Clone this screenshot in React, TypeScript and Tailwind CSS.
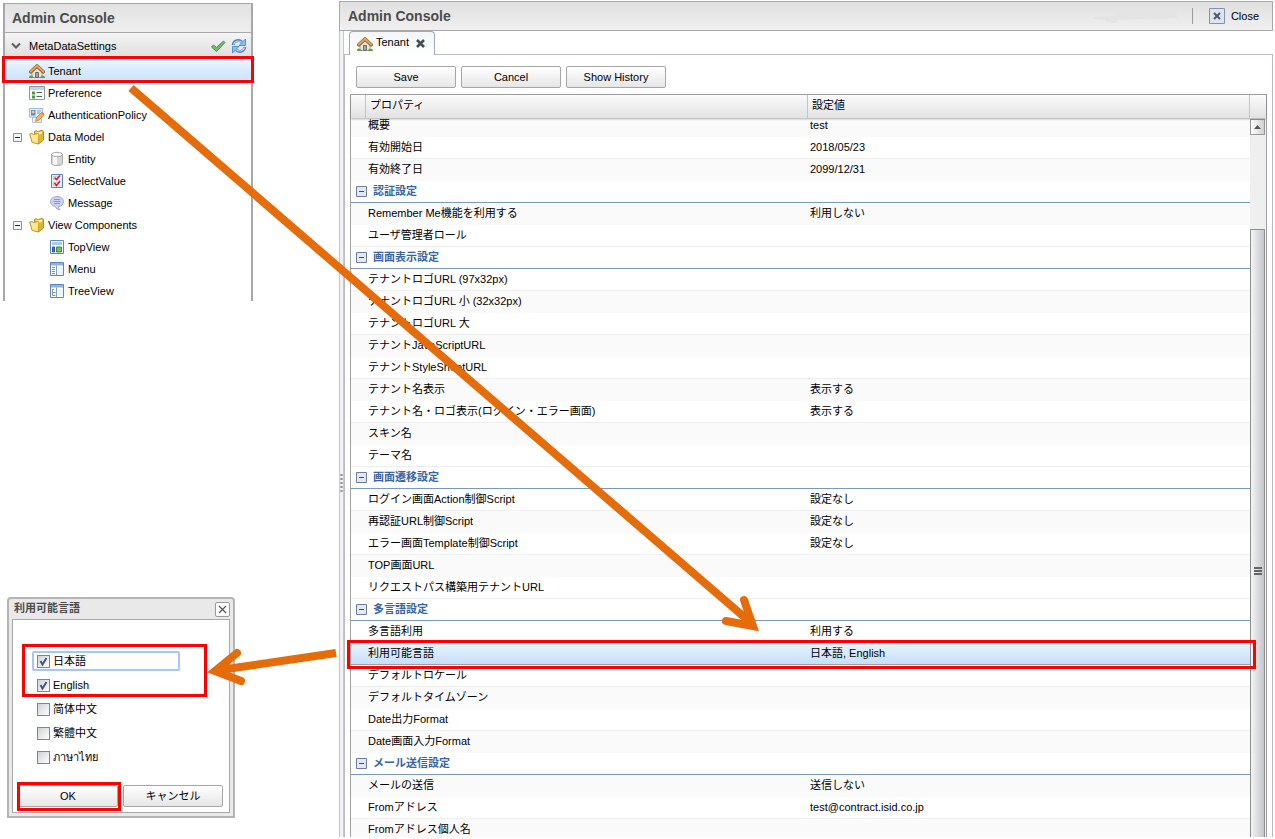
import type { ReactNode } from 'react';

type RowData = { name: string; value?: string; group?: boolean; selected?: boolean };

const ROWS: RowData[] = [
  { name: '概要', value: 'test' },
  { name: '有効開始日', value: '2018/05/23' },
  { name: '有効終了日', value: '2099/12/31' },
  { name: '認証設定', group: true },
  { name: 'Remember Me機能を利用する', value: '利用しない' },
  { name: 'ユーザ管理者ロール' },
  { name: '画面表示設定', group: true },
  { name: 'テナントロゴURL (97x32px)' },
  { name: 'テナントロゴURL 小 (32x32px)' },
  { name: 'テナントロゴURL 大' },
  { name: 'テナントJavaScriptURL' },
  { name: 'テナントStyleSheetURL' },
  { name: 'テナント名表示', value: '表示する' },
  { name: 'テナント名・ロゴ表示(ログイン・エラー画面)', value: '表示する' },
  { name: 'スキン名' },
  { name: 'テーマ名' },
  { name: '画面遷移設定', group: true },
  { name: 'ログイン画面Action制御Script', value: '設定なし' },
  { name: '再認証URL制御Script', value: '設定なし' },
  { name: 'エラー画面Template制御Script', value: '設定なし' },
  { name: 'TOP画面URL' },
  { name: 'リクエストパス構築用テナントURL' },
  { name: '多言語設定', group: true },
  { name: '多言語利用', value: '利用する' },
  { name: '利用可能言語', value: '日本語, English', selected: true },
  { name: 'デフォルトロケール' },
  { name: 'デフォルトタイムゾーン' },
  { name: 'Date出力Format' },
  { name: 'Date画面入力Format' },
  { name: 'メール送信設定', group: true },
  { name: 'メールの送信', value: '送信しない' },
  { name: 'Fromアドレス', value: 'test@contract.isid.co.jp' },
  { name: 'Fromアドレス個人名' },
];

const LANGUAGES = [
  { label: '日本語', checked: true, focused: true },
  { label: 'English', checked: true },
  { label: '简体中文', checked: false },
  { label: '繁體中文', checked: false },
  { label: 'ภาษาไทย', checked: false },
];

function Icon({ children }: { children: ReactNode }) {
  return (
    <svg width="16" height="16" viewBox="0 0 16 16" fill="none" className="shrink-0" aria-hidden="true">
      {children}
    </svg>
  );
}

function HouseIcon() {
  return (
    <Icon>
      <path d="M3 8 8 3.5 13 8v6.5H3z" fill="#e9e7e4" stroke="#8d8a86" strokeWidth=".8" />
      <path d="M6.5 9.5h3v5h-3z" fill="#a9a5a1" stroke="#66615c" strokeWidth=".9" />
      <path d="M1.8 8.8 8 3l6.2 5.8" stroke="#8a5a22" strokeWidth="3.6" strokeLinecap="round" strokeLinejoin="round" />
      <path d="M1.8 8.5 8 2.7l6.2 5.8" stroke="#dfa65a" strokeWidth="2.2" strokeLinecap="round" strokeLinejoin="round" />
      <path d="M0 15c0-2 1-2.8 2.3-2.3 1.3.3 2.3 1 2.7 2.3zM11 15c.3-1.4 1-2 2-2.2 1.8-.5 3 .3 3 2.2z" fill="#5f9e3f" />
    </Icon>
  );
}

function PreferenceIcon() {
  return (
    <Icon>
      <path d="M.5 1.5h15v13H.5z" fill="#fff" stroke="#8b98a5" />
      <path d="M1 2h14v3H1z" fill="#c9d3dd" />
      <path d="M3 6.5h3v3H3zM3 10.5h3v3H3z" fill="#4b9a45" />
      <path d="M7.5 7.5H13M7.5 11.5H13" stroke="#4f6a58" />
    </Icon>
  );
}

function PolicyIcon() {
  return (
    <Icon>
      <path d="M.5 1.5h13V10H.5z" fill="#e8f2fc" stroke="#9dbbdc" />
      <path d="M2 3h4.500v5.500H2z" fill="#4a8ad8" />
      <circle cx="4.2" cy="5" r="1.5" fill="#f7c28d" />
      <path d="M8 4h4M8 6h3" stroke="#6d9cd0" />
      <path d="M3.5 10.5h9v5h-9z" fill="#f3f4f5" stroke="#a9b0b8" strokeWidth=".8" />
      <path d="m6.5 14.500 1-4 5-5L15 8l-5 5z" fill="#f5b353" stroke="#c97d2b" strokeWidth=".8" />
      <path d="m12 6 1.400-1.300 2 2L14.200 8z" fill="#e87966" />
    </Icon>
  );
}

function FolderIcon() {
  return (
    <Icon>
      <path d="M5.5 4V2.500l2-1 1 1L13 1.500l1.500 1V11l-5 4z" fill="#eec84a" stroke="#a87f16" strokeWidth=".9" strokeLinejoin="round" />
      <path d="M7.5 3.500 13 2.700v2l-4 2z" fill="#fdf4bd" />
      <path d="M.7 5 3 4.500l1.500 1L9 4.500l1 .8-.7 9.700L3 13.300z" fill="#fce98e" stroke="#b58c1b" strokeWidth=".9" strokeLinejoin="round" />
      <path d="m9.500 14.500.7-8.500 3.800-2v7z" fill="#e3b52f" />
    </Icon>
  );
}

function EntityIcon() {
  return (
    <Icon>
      <path d="M2.5 3.500v9c0 2.700 11 2.700 11 0v-9z" fill="#d6d6d6" stroke="#a9a9a9" />
      <path d="M4 5v8c1 .7 2 .8 4 .9V5z" fill="#f8f8f8" />
      <ellipse cx="8" cy="3.5" rx="5.5" ry="2.2" fill="#f5f5f5" stroke="#a9a9a9" />
    </Icon>
  );
}

function SelectIcon() {
  return (
    <Icon>
      <path d="M2.500 1.500h11v13h-11z" fill="#e3eff9" stroke="#5486b6" />
      <path d="M4.500 3.500h4v3h-4zM4.500 9.500h4v3h-4z" fill="#fff" stroke="#a9b4bd" strokeWidth=".6" />
      <path d="m5.500 4.500 2 2 3.500-4M5.500 10l2 2.500 3.500-4.500" stroke="#d3262c" strokeWidth="1.7" />
    </Icon>
  );
}

function MessageIcon() {
  return (
    <Icon>
      <path d="M8 1.500c4 0 6.500 2.200 6.500 5S12 11.500 9.500 11.600c0 1.500.5 2.400 1.500 3.200-2.400-.2-4-1.200-4.700-3.300C3.300 11 1.500 9 1.500 6.500c0-2.800 2.500-5 6.500-5z" fill="#cfd1f3" stroke="#a2a4d8" />
      <path d="M5 4.500h6M4.500 6.500h7M5 8.500h6" stroke="#8f92cc" />
    </Icon>
  );
}

function ViewIcon({ kind }: { kind: 'top' | 'menu' | 'tree' }) {
  return (
    <Icon>
      <path d="M1.500 1.500h13v13h-13z" fill="#fff" stroke="#5c86bd" />
      {kind === 'top' && (
        <>
          <path d="M3 3h10v3H3z" fill="#a9cbee" />
          <path d="M3.500 8h2v5h-2z" fill="#3d74bd" stroke="#2b5a9d" />
          <path d="M7.500 8h5v5h-5z" fill="#76bd68" stroke="#3a8a3b" />
        </>
      )}
      {kind !== 'top' && (
        <>
          <path d="M2 2h12v2.500H2z" fill="#8db3e2" />
          <path d="M7.500 4.500V14" stroke="#7e9fca" />
          <path d="M9 6h5v7H9z" fill="#eef4fb" />
        </>
      )}
      {kind === 'menu' && <path d="M3 6.500h3M3 8.500h3M3 10.500h3M3 12.500h3" stroke="#8695a8" />}
      {kind === 'tree' && <path d="M3 6.500h2M3.500 7v5.500M3.500 9.500h3M3.500 12.500h3" stroke="#8695a8" />}
    </Icon>
  );
}

function CheckIcon() {
  return (
    <Icon>
      <path d="m1.500 9 2-2 3 2.500L13.500 3l1.500 1.500-8.500 9z" fill="#6cc067" stroke="#3f963f" strokeLinejoin="round" />
    </Icon>
  );
}

function RefreshIcon() {
  return (
    <Icon>
      <path d="M2.200 7C2.500 3 7.500 1 11 4" stroke="#3b7fce" strokeWidth="2.8" />
      <path d="M2.500 6.500C3.300 3.200 7.500 1.800 10.800 4.300" stroke="#c3e0fa" strokeWidth="1.2" />
      <path d="M14.500 1v6.500H8z" fill="#8cc0f2" stroke="#3b7fce" strokeWidth=".8" />
      <path d="M13.800 9c-.3 4-5.300 6-8.800 3" stroke="#3b7fce" strokeWidth="2.8" />
      <path d="M13.500 9.500c-.8 3.300-5 4.700-8.300 2.200" stroke="#c3e0fa" strokeWidth="1.2" />
      <path d="M1.500 15V8.500H8z" fill="#8cc0f2" stroke="#3b7fce" strokeWidth=".8" />
    </Icon>
  );
}

function TreeToggle() {
  return (
    <svg width="9" height="9" viewBox="0 0 9 9" fill="none" className="shrink-0" aria-hidden="true">
      <path d="M.5.5h8v8h-8z" fill="#f3f6f8" stroke="#7895ad" />
      <path d="M2 4.500h5" stroke="#222" />
    </svg>
  );
}

function GroupToggle() {
  return (
    <svg width="11" height="11" viewBox="0 0 11 11" fill="none" className="shrink-0" aria-hidden="true">
      <path d="M.5.5h10v10H.5z" fill="#e3e8f1" stroke="#6b7c9c" />
      <path d="M3 5.500h5" stroke="#3c4c6c" />
    </svg>
  );
}

function TreeItem({ icon, label, nested, folder, selected }: {
  icon: ReactNode;
  label: string;
  nested?: boolean;
  folder?: boolean;
  selected?: boolean;
}) {
  const indent = nested ? 'pl-[44px]' : folder ? 'pl-[8px]' : 'pl-[24px]';
  return (
    <li
      className={`relative flex h-[22px] items-center ${indent} ${
        selected ? 'bg-linear-to-b from-[#eaf4ff] to-[#c8e2fd]' : ''
      }`}
    >
      {folder && (
        <span className="mr-[7px] flex">
          <TreeToggle />
        </span>
      )}
      {icon}
      <span className="ml-[3px]">{label}</span>
      {selected && <span className="absolute -inset-x-[3px] -bottom-px -top-[4px] border-3 border-[#ff0000]" />}
    </li>
  );
}

function Sidebar() {
  return (
    <aside className="mt-[3px] h-[298px] border-x-2 border-[#a8a8a8]">
      <h1 className="flex h-[29px] items-center border-t border-[#a8a8a8] bg-linear-to-b from-[#e2e2e2] to-[#efefef] pl-[7px] text-[14px] font-bold text-[#4b4b4b]">
        Admin Console
      </h1>
      <div className="flex h-[26px] items-center border-t border-[#a8a8a8] bg-linear-to-b from-[#f5f5f5] to-[#dedede] pl-[6px] pr-[4px]">
        <svg width="10" height="8" viewBox="0 0 10 8" fill="none" aria-hidden="true">
          <path d="m1 1.500 4 4 4-4" stroke="#5b5b5b" strokeWidth="2" />
        </svg>
        <span className="ml-[8px] flex-1">MetaDataSettings</span>
        <button aria-label="Apply" className="mr-[5px]"><CheckIcon /></button>
        <button aria-label="Refresh"><RefreshIcon /></button>
      </div>
      <ul className="pt-[2px]">
        <TreeItem icon={<HouseIcon />} label="Tenant" selected />
        <TreeItem icon={<PreferenceIcon />} label="Preference" />
        <TreeItem icon={<PolicyIcon />} label="AuthenticationPolicy" />
        <TreeItem icon={<FolderIcon />} label="Data Model" folder />
        <TreeItem icon={<EntityIcon />} label="Entity" nested />
        <TreeItem icon={<SelectIcon />} label="SelectValue" nested />
        <TreeItem icon={<MessageIcon />} label="Message" nested />
        <TreeItem icon={<FolderIcon />} label="View Components" folder />
        <TreeItem icon={<ViewIcon kind="top" />} label="TopView" nested />
        <TreeItem icon={<ViewIcon kind="menu" />} label="Menu" nested />
        <TreeItem icon={<ViewIcon kind="tree" />} label="TreeView" nested />
      </ul>
    </aside>
  );
}

function PushButton({ children }: { children: ReactNode }) {
  return (
    <button className="h-[22px] w-[100px] rounded-xs border border-[#a6a6a6] bg-linear-to-b from-white to-[#e6e6e6]">
      {children}
    </button>
  );
}

function LanguageDialog() {
  return (
    <section
      role="dialog"
      aria-label="利用可能言語"
      className="ml-[4px] w-[228px] rounded-t-[4px] border-2 border-[#b4b4b4] bg-[#e9e9e9] px-[3px] pb-[3px]"
    >
      <header className="flex h-[20px] items-center justify-between pl-[2px]">
        <h2 className="pb-[2px] font-bold text-[#4b4b4b]">利用可能言語</h2>
        <button aria-label="Close dialog" className="flex size-[15px] items-center justify-center rounded-xs border border-[#999] bg-white">
          <svg width="9" height="9" viewBox="0 0 9 9" fill="none" aria-hidden="true">
            <path d="m1 1 7 7M8 1 1 8" stroke="#555" strokeWidth="1.2" />
          </svg>
        </button>
      </header>
      <div className="border border-[#a8a8a8] bg-white">
        <div className="flex flex-col pl-[19px] pt-[29px]">
          {LANGUAGES.map((lang) => (
            <label key={lang.label} className="flex h-[24px] items-center">
              <span
                className={`flex h-[20px] w-[148px] items-center rounded-xs border-2 pl-[3px] ${
                  lang.focused ? 'border-[#a5c5ff]' : 'border-transparent'
                }`}
              >
                <span className="relative flex size-[13px]">
                  <input
                    type="checkbox"
                    defaultChecked={lang.checked}
                    className="peer size-[13px] appearance-none border border-[#858585] bg-linear-to-br from-[#cfd2d6] to-white"
                  />
                  <svg width="13" height="13" viewBox="0 0 13 13" fill="none" className="pointer-events-none absolute inset-0 hidden peer-checked:block" aria-hidden="true">
                    <path d="m3.500 6 2 3.500L9.500 3" stroke="#44548f" strokeWidth="2" />
                  </svg>
                </span>
                <span className="ml-[3px]">{lang.label}</span>
              </span>
            </label>
          ))}
        </div>
        <div className="flex gap-[5px] px-[5px] pb-[5px] pt-[16px]">
          <span className="relative flex">
            <PushButton>OK</PushButton>
            <span className="pointer-events-none absolute -bottom-[4px] -left-px -right-[3px] -top-[3px] border-3 border-[#ff0000]" />
          </span>
          <PushButton>キャンセル</PushButton>
        </div>
      </div>
    </section>
  );
}

function PropertyRow({ row, index }: { row: RowData; index: number }) {
  if (row.group) {
    return (
      <tr className="h-[22px]">
        <th colSpan={2} className="border-b border-[#7798bf] pb-px pl-[5px] text-left font-bold text-[#3764a3]">
          <span className="flex items-center gap-[6px]">
            <GroupToggle />
            {row.name}
          </span>
        </th>
      </tr>
    );
  }
  const tone = row.selected
    ? 'bg-linear-to-b from-[#eaf4ff] to-[#c4dffc] border-[#a0a0a0]'
    : index % 2 === 0
      ? 'bg-[#fafafa] border-[#fafafa]'
      : 'border-[#eeeeee]';
  return (
    <tr className="h-[22px]">
      <td className={`border-b pb-px pl-[17px] ${tone}`}>{row.name}</td>
      <td className={`border-b pb-px pl-[2px] ${tone}`}>{row.value}</td>
    </tr>
  );
}

function Scrollbar() {
  return (
    <div className="flex w-[16px] shrink-0 flex-col bg-[#efefef] pr-px pt-px">
      <button aria-label="Scroll up" className="flex h-[16px] items-center justify-center border border-[#999] bg-linear-to-r from-white to-[#d0d0d0]">
        <svg width="7" height="4" viewBox="0 0 7 4" aria-hidden="true"><path d="M0 4 3.500 0 7 4z" fill="#555" /></svg>
      </button>
      <div className="mt-[94px] flex flex-1 items-center justify-center border border-b-0 border-[#8e8e8e] bg-linear-to-r from-[#f4f4f4] via-[#dcdde0] to-[#c4c6c9]">
        <svg width="8" height="9" viewBox="0 0 8 9" className="mb-[-76px]" aria-hidden="true">
          <path d="M0 1h8M0 4h8M0 7h8" stroke="#666" strokeWidth="2" />
        </svg>
      </div>
    </div>
  );
}

function PropertyGrid() {
  return (
    <div className="relative mx-[5px] flex min-h-0 flex-1 flex-col border border-b-0 border-[#a0a0a0]">
      <div className="z-10 flex h-[23px] shrink-0 bg-linear-to-b from-[#fbfbfb] to-[#e2e2e2] leading-[21px] shadow-[0_1px_2px_#00000050]">
        <span className="w-[15px] border-r border-[#c4c4c4]" />
        <span className="w-[442px] border-r border-[#c4c4c4] pl-[4px]">プロパティ</span>
        <span className="flex-1 border-r border-[#c4c4c4] pl-[4px]">設定値</span>
        <span className="w-[16px]" />
      </div>
      <div className="flex min-h-0 flex-1">
        <div className="min-w-0 flex-1 overflow-hidden">
          {/* scrolled a little, so the first row slides under the header */}
          <table className="-mt-[3px] w-full table-fixed border-separate border-spacing-0">
            <colgroup>
              <col className="w-[457px]" />
              <col />
            </colgroup>
            <tbody>
              {ROWS.map((row, i) => (
                <PropertyRow key={row.name} row={row} index={i} />
              ))}
            </tbody>
          </table>
        </div>
        <Scrollbar />
      </div>
      <span className="pointer-events-none absolute -left-[4px] bottom-[168px] right-[10px] h-[29px] border-3 border-[#ff0000]" />
    </div>
  );
}

function MainPanel() {
  return (
    <main className="mr-[2px] mt-px flex h-[836px] min-w-0 flex-1 flex-col">
      <header className="flex h-[30px] shrink-0 items-center border border-[#a8a8a8] bg-linear-to-b from-[#e0e0e0] to-[#f0f0f0] pl-[8px] pr-[13px]">
        <h1 className="flex-1 text-[14px] font-bold text-[#4b4b4b]">Admin Console</h1>
        <svg width="90" height="18" viewBox="0 0 90 18" className="mr-[10px]" aria-hidden="true">
          <path d="M1 10 20 9 28 4 60 3 84 4 85 11 60 12 26 13 24 16 14 15 13 13 2 12z" fill="#e4e4e4" />
        </svg>
        <span className="mr-[16px] h-[16px] w-px bg-[#9c9c9c]" />
        <button className="flex items-center gap-[6px]">
          <svg width="16" height="16" viewBox="0 0 16 16" fill="none" aria-hidden="true">
            <path d="M.5.5h15v15H.5z" fill="#dfe4ec" stroke="#8592ac" />
            <path d="m5 5 6 6M11 5l-6 6" stroke="#4c566e" strokeWidth="2" />
          </svg>
          Close
        </button>
      </header>
      <div className="flex min-h-0 flex-1">
        <div className="flex w-[5px] flex-col items-center justify-center border-x border-[#c8c8c8] bg-[#f1f1f1] pt-[98px]">
          <svg width="3" height="19" viewBox="0 0 3 19" aria-hidden="true">
            <path d="M1.500 0v19" stroke="#888" strokeWidth="2" strokeDasharray="2 2" />
          </svg>
        </div>
        <div className="flex min-w-0 flex-1 flex-col">
          <nav className="flex h-[24px] shrink-0 border-b border-[#b9bcc6] pl-[5px]">
            <div className="mb-[-1px] flex w-[86px] items-center rounded-t-[4px] border border-b-0 border-[#9aa9c6] bg-linear-to-b from-[#f3f5f9] to-white pl-[7px]">
              <HouseIcon />
              <span className="ml-[3px] pb-[3px]">Tenant</span>
              <button aria-label="Close tab" className="ml-[7px]">
                <svg width="9" height="9" viewBox="0 0 9 9" fill="none" aria-hidden="true">
                  <path d="m1 1 7 7M8 1 1 8" stroke="#444c50" strokeWidth="2.6" />
                </svg>
              </button>
            </div>
          </nav>
          <div className="flex min-h-0 flex-1 flex-col border-x border-[#b9bcc6]">
            <div className="flex gap-[5px] px-[11px] pb-[6px] pt-[11px]">
              <PushButton>Save</PushButton>
              <PushButton>Cancel</PushButton>
              <PushButton>Show History</PushButton>
            </div>
            <PropertyGrid />
          </div>
        </div>
      </div>
    </main>
  );
}

export default function App() {
  return (
    <div
      lang="ja"
      className="relative flex overflow-hidden bg-white pb-[2px] pl-[3px] font-['Liberation_Sans','Noto_Sans_CJK_JP',sans-serif] text-[11px] leading-[14px] text-black"
    >
      <div className="flex w-[250px] shrink-0 flex-col">
        <Sidebar />
        <div className="relative mt-[296px]">
          <LanguageDialog />
          <span className="pointer-events-none absolute left-[19px] top-[47px] h-[53px] w-[185px] border-3 border-[#ff0000]" />
        </div>
      </div>
      <div className="w-[86px] shrink-0" />
      <MainPanel />
      <svg width="1275" height="839" viewBox="0 0 1275 839" fill="none" className="pointer-events-none absolute left-0 top-0" aria-hidden="true">
        <g stroke="#e46c0a" strokeWidth="8">
          <path d="M131 88 750 622" />
          <path d="M744 600 753 626 726 621" strokeLinecap="round" />
          <path d="M336 653 220 670" />
          <path d="M237 653 215 671 241 681" strokeLinecap="round" />
        </g>
      </svg>
    </div>
  );
}
